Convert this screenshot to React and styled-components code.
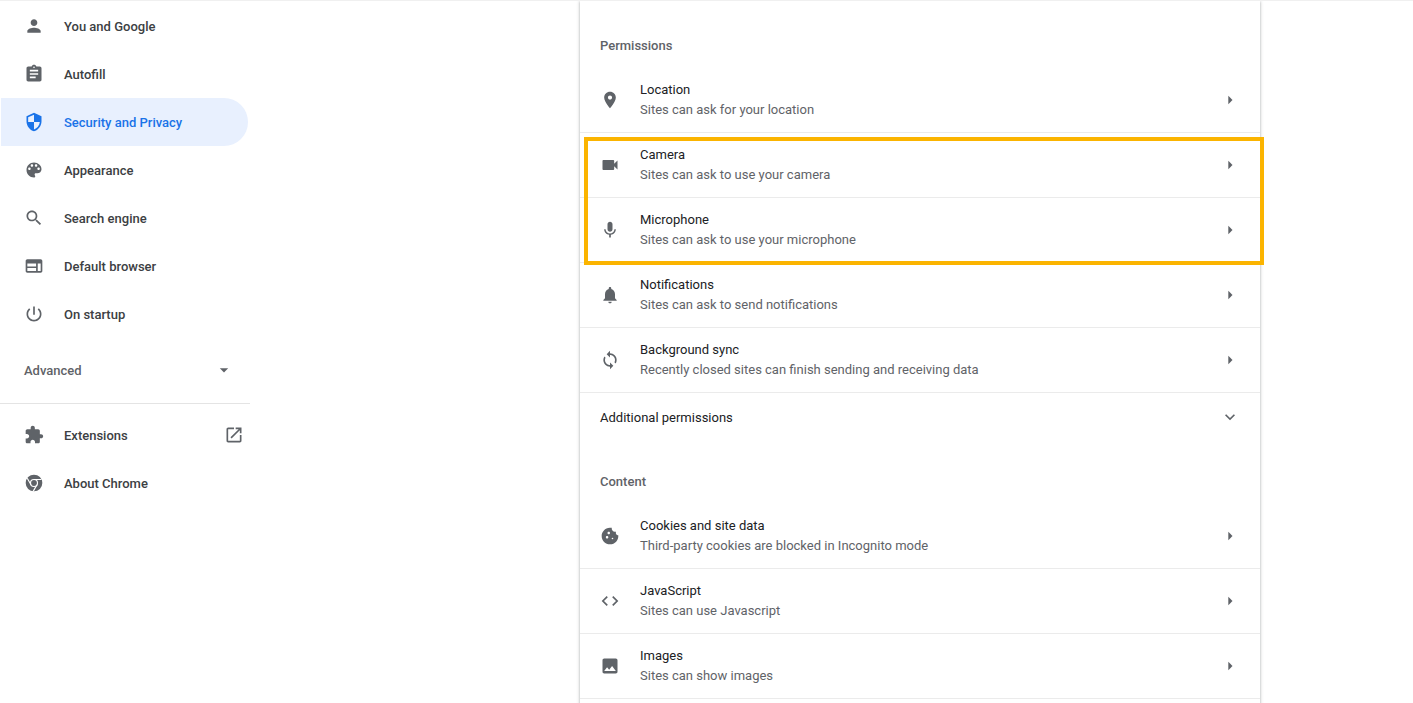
import React from "react";
import styled, { createGlobalStyle } from "styled-components";

const ICONS = {
  person: "M12 12c2.21 0 4-1.79 4-4s-1.79-4-4-4-4 1.79-4 4 1.79 4 4 4zm0 2c-2.67 0-8 1.34-8 4v2h16v-2c0-2.66-5.33-4-8-4z",
  assignment: "M19 3h-4.18C14.4 1.84 13.3 1 12 1c-1.3 0-2.4.84-2.82 2H5c-1.1 0-2 .9-2 2v14c0 1.1.9 2 2 2h14c1.1 0 2-.9 2-2V5c0-1.1-.9-2-2-2zm-7 0c.55 0 1 .45 1 1s-.45 1-1 1-1-.45-1-1 .45-1 1-1zm2 14H7v-2h7v2zm3-4H7v-2h10v2zm0-4H7V7h10v2z",
  shield: "M12 1L3 5v6c0 5.55 3.84 10.74 9 12 5.16-1.26 9-6.45 9-12V5l-9-4zm0 10.99h7c-.53 4.12-3.28 7.79-7 8.94V12H5V6.3l7-3.11v8.8z",
  palette: "M12 3c-4.97 0-9 4.03-9 9s4.03 9 9 9c.83 0 1.5-.67 1.5-1.5 0-.39-.15-.74-.39-1.01-.23-.26-.38-.61-.38-.99 0-.83.67-1.5 1.5-1.5H16c2.76 0 5-2.24 5-5 0-4.42-4.03-8-9-8zm-5.5 9c-.83 0-1.5-.67-1.5-1.5S5.67 9 6.5 9 8 9.67 8 10.5 7.33 12 6.5 12zm3-4C8.67 8 8 7.33 8 6.5S8.67 5 9.5 5s1.5.67 1.5 1.5S10.33 8 9.5 8zm5 0c-.83 0-1.5-.67-1.5-1.5S13.67 5 14.5 5s1.5.67 1.5 1.5S15.33 8 14.5 8zm3 4c-.83 0-1.5-.67-1.5-1.5S16.67 9 17.5 9s1.5.67 1.5 1.5-.67 1.5-1.5 1.5z",
  search: "M15.5 14h-.79l-.28-.27C15.41 12.59 16 11.11 16 9.5 16 5.91 13.09 3 9.5 3S3 5.91 3 9.5 5.91 16 9.5 16c1.61 0 3.09-.59 4.23-1.57l.27.28v.79l5 4.99L20.49 19l-4.99-5zm-6 0C7.01 14 5 11.99 5 9.5S7.01 5 9.5 5 14 7.01 14 9.5 11.99 14 9.5 14z",
  web: "M20 4H4c-1.1 0-2 .9-2 2v12c0 1.1.9 2 2 2h16c1.1 0 2-.9 2-2V6c0-1.1-.9-2-2-2zM4 9h10.5v3.5H4V9zm0 5.5h10.5V18H4v-3.5zM20 18h-3.5V9H20v9z",
  power: "M13 3h-2v10h2V3zm4.83 2.17l-1.42 1.42C17.99 7.86 19 9.81 19 12c0 3.87-3.13 7-7 7s-7-3.13-7-7c0-2.19 1.01-4.14 2.58-5.42L6.17 5.17C4.23 6.82 3 9.26 3 12c0 4.97 4.03 9 9 9s9-4.03 9-9c0-2.74-1.23-5.18-3.17-6.83z",
  extension: "M20.5 11H19V7c0-1.1-.9-2-2-2h-4V3.5C13 2.12 11.88 1 10.5 1S8 2.12 8 3.5V5H4c-1.1 0-1.99.9-1.99 2v3.8H3.5c1.49 0 2.7 1.21 2.7 2.7s-1.21 2.7-2.7 2.7H2V20c0 1.1.9 2 2 2h3.8v-1.5c0-1.49 1.21-2.7 2.7-2.7 1.49 0 2.7 1.21 2.7 2.7V22H17c1.1 0 2-.9 2-2v-4h1.5c1.38 0 2.5-1.12 2.5-2.5S21.88 11 20.5 11z",
  openNew: "M19 19H5V5h7V3H5c-1.11 0-2 .9-2 2v14c0 1.1.89 2 2 2h14c1.1 0 2-.9 2-2v-7h-2v7zM14 3v2h3.59l-9.83 9.83 1.41 1.41L19 6.41V10h2V3h-7z",
  location: "M12 2C8.13 2 5 5.13 5 9c0 5.25 7 13 7 13s7-7.75 7-13c0-3.87-3.13-7-7-7zm0 9.5c-1.38 0-2.5-1.12-2.5-2.5s1.12-2.5 2.5-2.5 2.5 1.12 2.5 2.5-1.12 2.5-2.5 2.5z",
  camera: "M17 10.5V7c0-.55-.45-1-1-1H4c-.55 0-1 .45-1 1v10c0 .55.45 1 1 1h12c.55 0 1-.45 1-1v-3.5l4 4v-11l-4 4z",
  mic: "M12 14c1.66 0 2.99-1.34 2.99-3L15 5c0-1.66-1.34-3-3-3S9 3.34 9 5v6c0 1.66 1.34 3 3 3zm5.3-3c0 3-2.54 5.1-5.3 5.1S6.7 14 6.7 11H5c0 3.41 2.72 6.23 6 6.72V21h2v-3.28c3.28-.48 6-3.3 6-6.72h-1.7z",
  bell: "M12 22c1.1 0 2-.9 2-2h-4c0 1.1.89 2 2 2zm6-6v-5c0-3.07-1.64-5.64-4.5-6.32V4c0-.83-.67-1.5-1.5-1.5s-1.5.67-1.5 1.5v.68C7.63 5.36 6 7.92 6 11v5l-2 2v1h16v-1l-2-2z",
  sync: "M12 4V1L8 5l4 4V6c3.31 0 6 2.69 6 6 0 1.01-.25 1.97-.7 2.8l1.46 1.46C19.54 15.03 20 13.57 20 12c0-4.42-3.58-8-8-8zm0 14c-3.31 0-6-2.69-6-6 0-1.01.25-1.97.7-2.8L5.24 7.74C4.46 8.97 4 10.43 4 12c0 4.42 3.58 8 8 8v3l4-4-4-4v3z",
  cookie: "M21.95 10.99c-1.79-.03-3.7-1.95-2.68-4.22-2.98 1-5.77-1.59-5.19-4.56C6.95.71 2 6.58 2 12c0 5.52 4.48 10 10 10 5.89 0 10.54-5.08 9.95-11.01zM8.5 15c-.83 0-1.5-.67-1.5-1.5S7.67 12 8.5 12s1.5.67 1.5 1.5S9.33 15 8.5 15zm2-5C9.67 10 9 9.33 9 8.5S9.67 7 10.5 7s1.5.67 1.5 1.5-.67 1.5-1.5 1.5zm4.5 6c-.55 0-1-.45-1-1s.45-1 1-1 1 .45 1 1-.45 1-1 1z",
  code: "M9.4 16.6L4.8 12l4.6-4.6L8 6l-6 6 6 6 1.4-1.4zm5.2 0l4.6-4.6-4.6-4.6L16 6l6 6-6 6-1.4-1.4z",
  image: "M21 19V5c0-1.1-.9-2-2-2H5c-1.1 0-2 .9-2 2v14c0 1.1.9 2 2 2h14c1.1 0 2-.9 2-2zM8.5 13.5l2.5 3.01L14.5 12l4.5 6H5l3.5-4.5z",
  arrowRight: "M10 7l5 5-5 5z",
  caretDown: "M7 10l5 5 5-5z",
  chevronDown: "M16.59 8.59L12 13.17 7.41 8.59 6 10l6 6 6-6z",
};

const NAV_TOP = [
  { icon: "person", label: "You and Google" },
  { icon: "assignment", label: "Autofill" },
  { icon: "shield", label: "Security and Privacy", active: true },
  { icon: "palette", label: "Appearance" },
  { icon: "search", label: "Search engine" },
  { icon: "web", label: "Default browser" },
  { icon: "power", label: "On startup" },
];

const PERMISSIONS = [
  { icon: "location", title: "Location", sub: "Sites can ask for your location" },
  { icon: "camera", title: "Camera", sub: "Sites can ask to use your camera" },
  { icon: "mic", title: "Microphone", sub: "Sites can ask to use your microphone" },
  { icon: "bell", title: "Notifications", sub: "Sites can ask to send notifications" },
  { icon: "sync", title: "Background sync", sub: "Recently closed sites can finish sending and receiving data" },
];

const CONTENT = [
  { icon: "cookie", title: "Cookies and site data", sub: "Third-party cookies are blocked in Incognito mode" },
  { icon: "code", title: "JavaScript", sub: "Sites can use Javascript" },
  { icon: "image", title: "Images", sub: "Sites can show images" },
];

const GlobalStyle = createGlobalStyle`
  html, body {
    margin: 0;
    background: #fff;
    overflow: hidden;
  }
  body {
    font-family: Roboto, "Liberation Sans", sans-serif;
    font-size: 13px;
  }
`;

const Page = styled.div`
  height: 703px;
  overflow: hidden;
  border-top: 1px solid #f0f0f0;
  box-sizing: border-box;
  display: flex;
`;

const Sidebar = styled.nav`
  flex: 0 0 250px;
  padding-top: 1px;
`;

const NavItem = styled.div`
  display: flex;
  align-items: center;
  height: 48px;
  margin-left: 1px;
  width: 247px;
  box-sizing: border-box;
  padding-left: 23px;
  border-radius: 0 24px 24px 0;
  font-weight: 500;
  color: ${(p) => (p.$active ? "#1a73e8" : "#3c4043")};
  background: ${(p) => (p.$active ? "#e8f0fe" : "transparent")};
`;

const NavIcon = styled.svg`
  flex: 0 0 20px;
  width: 20px;
  height: 20px;
  margin-right: 20px;
  fill: ${(p) => (p.$active ? "#1a73e8" : "#5f6368")};
`;

const OpenIcon = styled.svg`
  width: 20px;
  height: 20px;
  margin-left: auto;
  margin-right: 4px;
  fill: #5f6368;
`;

const AdvancedRow = styled.div`
  display: flex;
  align-items: center;
  justify-content: space-between;
  height: 48px;
  margin-top: 8px;
  padding: 0 16px 0 24px;
  width: 250px;
  box-sizing: border-box;
  font-weight: 500;
  color: #5f6368;
`;

const CaretIcon = styled.svg`
  width: 20px;
  height: 20px;
  fill: #5f6368;
`;

const Divider = styled.div`
  height: 1px;
  background: #e4e4e4;
  margin: 9px 0 7px;
`;

const Main = styled.main`
  flex: 1;
  padding-left: 330px;
`;

const Card = styled.section`
  position: relative;
  width: 680px;
  min-height: 760px;
  background: #fff;
  box-shadow: 0 1px 2px rgba(60, 64, 67, 0.3), 0 1px 3px 1px rgba(60, 64, 67, 0.15);
`;

const SectionTitle = styled.h2`
  margin: 0;
  padding: ${(p) => p.$pad};
  font-size: 13px;
  line-height: 20px;
  font-weight: 500;
  color: #5f6368;
`;

const Row = styled.div`
  display: flex;
  align-items: center;
  height: 65px;
  box-sizing: border-box;
  padding: 0 20px;
  border-bottom: 1px solid #ebebeb;
`;

const RowIcon = styled.svg`
  flex: 0 0 20px;
  width: 20px;
  height: 20px;
  margin-right: 20px;
  fill: #5f6368;
`;

const RowText = styled.div`
  flex: 1;
  line-height: 20px;
`;

const RowTitle = styled.div`
  color: #202124;
`;

const RowSub = styled.div`
  color: #5f6368;
`;

const RowArrow = styled.svg`
  width: 20px;
  height: 20px;
  fill: #5f6368;
`;

const ExpandRow = styled.div`
  display: flex;
  align-items: center;
  justify-content: space-between;
  height: 48px;
  padding: 0 20px;
  color: #202124;
`;

// Yellow annotation box drawn over the Camera and Microphone rows
const Highlight = styled.div`
  position: absolute;
  left: 4px;
  top: 136px;
  width: 680px;
  height: 128px;
  box-sizing: border-box;
  border: 4px solid #fbb400;
  pointer-events: none;
`;

const ChromeLogo = () => (
  <NavIcon viewBox="0 0 24 24">
    <circle cx="12" cy="12" r="10" fill="#5f6368" />
    <circle cx="12" cy="12" r="4.2" fill="none" stroke="#fff" strokeWidth="1.4" />
    <path d="M12 7.8h9M8.4 14.1L3.9 6.3M15.6 14.1L11 22" fill="none" stroke="#fff" strokeWidth="1.4" />
  </NavIcon>
);

const Icon = ({ as: Comp, name, ...rest }) => (
  <Comp viewBox="0 0 24 24" {...rest}>
    <path d={ICONS[name]} />
  </Comp>
);

const PermissionRow = ({ icon, title, sub }) => (
  <Row>
    <Icon as={RowIcon} name={icon} />
    <RowText>
      <RowTitle>{title}</RowTitle>
      <RowSub>{sub}</RowSub>
    </RowText>
    <Icon as={RowArrow} name="arrowRight" />
  </Row>
);

export default function App() {
  return (
    <>
      <GlobalStyle />
      <Page>
        <Sidebar>
          {NAV_TOP.map((item) => (
            <NavItem key={item.label} $active={item.active}>
              <Icon as={NavIcon} name={item.icon} $active={item.active} />
              {item.label}
            </NavItem>
          ))}
          <AdvancedRow>
            Advanced
            <Icon as={CaretIcon} name="caretDown" />
          </AdvancedRow>
          <Divider />
          <NavItem>
            <Icon as={NavIcon} name="extension" />
            Extensions
            <Icon as={OpenIcon} name="openNew" />
          </NavItem>
          <NavItem>
            <ChromeLogo />
            About Chrome
          </NavItem>
        </Sidebar>
        <Main>
          <Card>
            <SectionTitle $pad="35px 20px 12px">Permissions</SectionTitle>
            {PERMISSIONS.map((row) => (
              <PermissionRow key={row.title} {...row} />
            ))}
            <ExpandRow>
              Additional permissions
              <Icon as={RowArrow} name="chevronDown" />
            </ExpandRow>
            <SectionTitle $pad="31px 20px 12px">Content</SectionTitle>
            {CONTENT.map((row) => (
              <PermissionRow key={row.title} {...row} />
            ))}
            <Highlight />
          </Card>
        </Main>
      </Page>
    </>
  );
}
